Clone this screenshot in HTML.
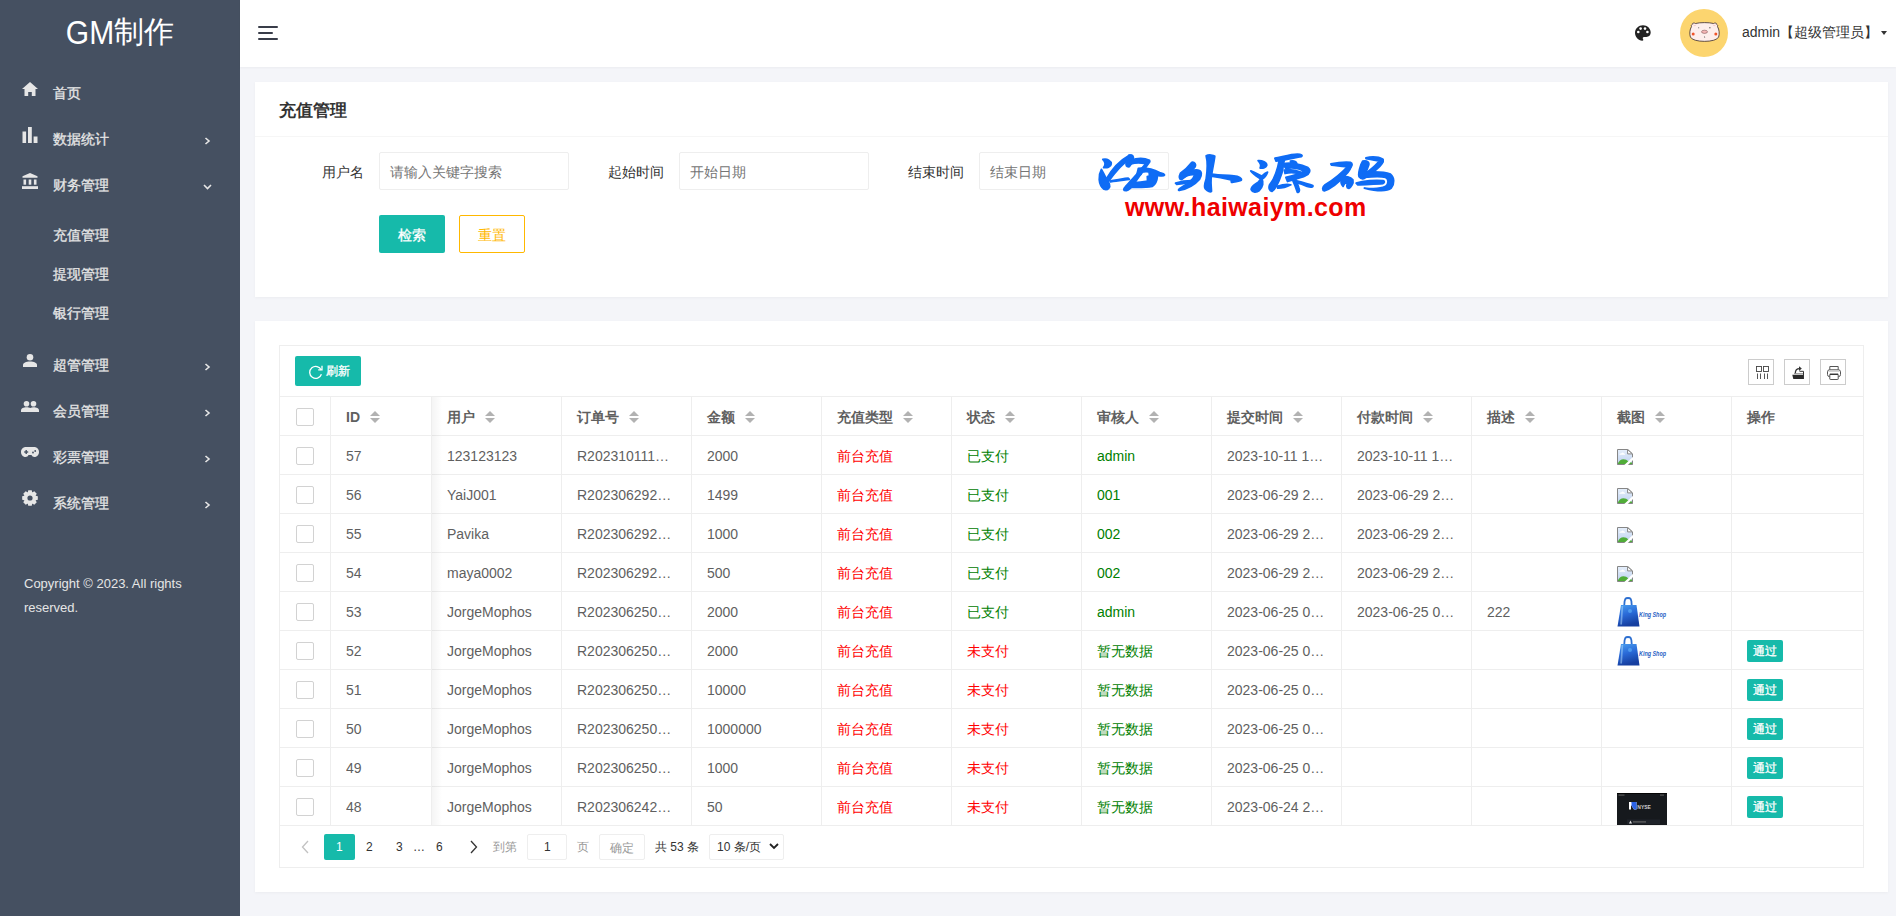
<!DOCTYPE html>
<html><head><meta charset="utf-8">
<style>
*{box-sizing:border-box;margin:0;padding:0}
html,body{width:1896px;height:916px;overflow:hidden}
body{position:relative;background:#f4f5f9;font-family:"Liberation Sans",sans-serif;font-size:14px;color:#333}
.a{position:absolute;white-space:nowrap}
.t14{font-size:14px;line-height:14px}
.t12{font-size:12px;line-height:12px}
.stk{-webkit-text-stroke:0.3px currentColor}
.card{position:absolute;background:#fff;box-shadow:0 1px 3px rgba(0,0,0,.04)}
.hl{position:absolute;height:1px;background:#eee}
.vl{position:absolute;width:1px;background:#eee}
.cb{position:absolute;width:18px;height:18px;border:1px solid #d2d2d2;border-radius:2px;background:#fff}
.th{position:absolute;font-size:14px;line-height:14px;font-weight:bold;color:#5f5f5f;white-space:nowrap}
.td{position:absolute;font-size:14px;line-height:20px;height:20px;color:#5f5f5f;white-space:nowrap;overflow:hidden;text-overflow:ellipsis;width:100px}
.sort{position:absolute;width:10px;height:12px}
.sort:before{content:"";position:absolute;left:0;top:0;border-left:5px solid transparent;border-right:5px solid transparent;border-bottom:5px solid #b2b2b2}
.sort:after{content:"";position:absolute;left:0;top:7px;border-left:5px solid transparent;border-right:5px solid transparent;border-top:5px solid #b2b2b2}
.red{color:#ff0000}
.grn{color:#008000}
.pass{-webkit-text-stroke:0.3px #fff;position:absolute;width:36px;height:22px;line-height:22px;background:#16baaa;color:#fff;font-size:12px;text-align:center;border-radius:2px}
.tool{position:absolute;top:14px;width:26px;height:26px;border:1px solid #ccc}
</style></head><body>

<div class="a" style="left:0;top:0;width:240px;height:916px;background:#455061;"></div>
<div class="a" style="left:0;top:17px;width:240px;text-align:center;font-size:30px;line-height:30px;color:#fff"><span style="display:inline-block;transform:scaleY(1.1);transform-origin:50% 4px">GM</span>制作</div>
<svg class="a" style="left:22px;top:82px" width="16" height="14" viewBox="0 0 16 14"><path d="M8 0 L16 7 L13.5 7 L13.5 14 L9.8 14 L9.8 10 L6.2 10 L6.2 14 L2.5 14 L2.5 7 L0 7 Z" fill="#e6e6e6"/></svg>
<svg class="a" style="left:22px;top:127px" width="16" height="16" viewBox="0 0 16 16"><rect x="0.5" y="4.5" width="3.6" height="11.5" fill="#e6e6e6"/><rect x="6" y="0" width="3.8" height="16" fill="#e6e6e6"/><rect x="11.6" y="9.5" width="3.9" height="6.5" fill="#e6e6e6"/></svg>
<svg class="a" style="left:22px;top:173px" width="16" height="16" viewBox="0 0 16 16"><path d="M8 0 L15.5 3.2 L15.5 4.8 L0.5 4.8 L0.5 3.2 Z" fill="#e6e6e6"/><rect x="1.5" y="6.5" width="2.6" height="5.2" fill="#e6e6e6"/><rect x="6.7" y="6.5" width="2.6" height="5.2" fill="#e6e6e6"/><rect x="11.9" y="6.5" width="2.6" height="5.2" fill="#e6e6e6"/><rect x="0" y="13.2" width="16" height="2.8" fill="#e6e6e6"/></svg>
<svg class="a" style="left:23px;top:354px" width="14" height="13" viewBox="0 0 14 13"><circle cx="7" cy="3.3" r="3.3" fill="#e6e6e6"/><path d="M0 13 L0 11 C0 8.6 3 7.4 7 7.4 C11 7.4 14 8.6 14 11 L14 13 Z" fill="#e6e6e6"/></svg>
<svg class="a" style="left:21px;top:401px" width="18" height="11" viewBox="0 0 18 11"><circle cx="5.5" cy="2.8" r="2.8" fill="#e6e6e6"/><circle cx="12.5" cy="2.8" r="2.8" fill="#e6e6e6"/><path d="M0 11 L0 9.5 C0 7.3 2.5 6.2 5.5 6.2 C8.5 6.2 11 7.3 11 9.5 L11 11 Z" fill="#e6e6e6"/><path d="M8.2 11 L8.2 9.5 C8.2 7.3 10 6.2 12.5 6.2 C15.5 6.2 18 7.3 18 9.5 L18 11 Z" fill="#e6e6e6"/></svg>
<svg class="a" style="left:21px;top:447px" width="18" height="10" viewBox="0 0 18 10"><path d="M5 0 L13 0 C16 0 18 2.2 18 5 C18 7.8 16 10 13.5 10 C12 10 11 9 10.5 8 L7.5 8 C7 9 6 10 4.5 10 C2 10 0 7.8 0 5 C0 2.2 2 0 5 0 Z" fill="#e6e6e6"/><rect x="3.2" y="4.3" width="4" height="1.4" fill="#455061"/><rect x="4.5" y="3" width="1.4" height="4" fill="#455061"/><circle cx="12" cy="5.5" r="0.9" fill="#455061"/><circle cx="14.2" cy="4" r="0.9" fill="#455061"/></svg>
<svg class="a" style="left:22px;top:490px" width="16" height="16" viewBox="0 0 16 16"><path fill="#e6e6e6" fill-rule="evenodd" d="M13.80 5.82 L15.81 6.25 L15.81 9.75 L13.80 10.18 L13.65 10.56 L14.76 12.29 L12.29 14.76 L10.56 13.65 L10.18 13.80 L9.75 15.81 L6.25 15.81 L5.82 13.80 L5.44 13.65 L3.71 14.76 L1.24 12.29 L2.35 10.56 L2.20 10.18 L0.19 9.75 L0.19 6.25 L2.20 5.82 L2.35 5.44 L1.24 3.71 L3.71 1.24 L5.44 2.35 L5.82 2.20 L6.25 0.19 L9.75 0.19 L10.18 2.20 L10.56 2.35 L12.29 1.24 L14.76 3.71 L13.65 5.44 Z M10.6 8 A2.6 2.6 0 1 0 5.4 8 A2.6 2.6 0 1 0 10.6 8 Z"/></svg>
<div class="a t14 stk" style="left:53px;top:86px;color:#e6e6e6">首页</div>
<div class="a t14 stk" style="left:53px;top:132px;color:#e6e6e6">数据统计</div>
<svg class="a" style="left:204px;top:137px" width="7" height="8" viewBox="0 0 7 8"><path d="M1.5 1 L5 4 L1.5 7" stroke="#e6e6e6" stroke-width="1.6" fill="none"/></svg>
<div class="a t14 stk" style="left:53px;top:178px;color:#e6e6e6">财务管理</div>
<svg class="a" style="left:203px;top:184px" width="9" height="6" viewBox="0 0 9 6"><path d="M1 1 L4.5 4.5 L8 1" stroke="#e6e6e6" stroke-width="1.6" fill="none"/></svg>
<div class="a t14 stk" style="left:53px;top:228px;color:#e6e6e6">充值管理</div>
<div class="a t14 stk" style="left:53px;top:267px;color:#e6e6e6">提现管理</div>
<div class="a t14 stk" style="left:53px;top:306px;color:#e6e6e6">银行管理</div>
<div class="a t14 stk" style="left:53px;top:358px;color:#e6e6e6">超管管理</div>
<svg class="a" style="left:204px;top:363px" width="7" height="8" viewBox="0 0 7 8"><path d="M1.5 1 L5 4 L1.5 7" stroke="#e6e6e6" stroke-width="1.6" fill="none"/></svg>
<div class="a t14 stk" style="left:53px;top:404px;color:#e6e6e6">会员管理</div>
<svg class="a" style="left:204px;top:409px" width="7" height="8" viewBox="0 0 7 8"><path d="M1.5 1 L5 4 L1.5 7" stroke="#e6e6e6" stroke-width="1.6" fill="none"/></svg>
<div class="a t14 stk" style="left:53px;top:450px;color:#e6e6e6">彩票管理</div>
<svg class="a" style="left:204px;top:455px" width="7" height="8" viewBox="0 0 7 8"><path d="M1.5 1 L5 4 L1.5 7" stroke="#e6e6e6" stroke-width="1.6" fill="none"/></svg>
<div class="a t14 stk" style="left:53px;top:496px;color:#e6e6e6">系统管理</div>
<svg class="a" style="left:204px;top:501px" width="7" height="8" viewBox="0 0 7 8"><path d="M1.5 1 L5 4 L1.5 7" stroke="#e6e6e6" stroke-width="1.6" fill="none"/></svg>
<div class="a" style="left:24px;top:572px;font-size:13px;line-height:24px;color:#e6e6e6;white-space:normal;width:200px">Copyright © 2023. All rights<br>reserved.</div>
<div class="a" style="left:240px;top:0;width:1656px;height:67px;background:#fff;box-shadow:0 1px 2px rgba(0,0,0,.04)"></div>
<div class="a" style="left:258px;top:26px;width:20px;height:2px;background:#393d49;border-radius:1px"></div>
<div class="a" style="left:258px;top:32px;width:15px;height:2px;background:#393d49;border-radius:1px"></div>
<div class="a" style="left:258px;top:38px;width:20px;height:2px;background:#393d49;border-radius:1px"></div>
<svg class="a" style="left:1635px;top:25px" width="16" height="16" viewBox="0 0 16 16"><path d="M8 0.3 C3.6 0.3 0 3.6 0 7.8 C0 12 3.3 15.7 7.3 15.7 C8.3 15.7 8.6 15 8 14.1 C7.4 13.2 7.8 12 9 12 L11.3 12 C14 12 15.7 10.3 15.7 7.6 C15.7 3.4 12.3 0.3 8 0.3 Z" fill="#222"/><circle cx="3.3" cy="7" r="1.3" fill="#fff"/><circle cx="5.6" cy="3.6" r="1.3" fill="#fff"/><circle cx="10" cy="3.6" r="1.3" fill="#fff"/><circle cx="12.4" cy="7" r="1.3" fill="#fff"/></svg>
<div class="a" style="left:1680px;top:9px;width:48px;height:48px;border-radius:50%;background:#fcd56f"></div>
<svg class="a" style="left:1689px;top:22px" width="31" height="21" viewBox="0 0 31 21"><path d="M3.5 2.3 C3 1.2 5 0.6 6.5 1.5 C11 0.3 20 0.3 24.5 1.5 C26 0.6 28 1.2 27.5 2.3 C28.5 2.6 29 3.5 28.5 4.6 C30.3 7.5 30.7 12 29.6 15 C27.5 20.8 3.5 20.8 1.4 15 C0.3 12 0.7 7.5 2.5 4.6 C2 3.5 2.5 2.6 3.5 2.3 Z" fill="#fdeeec" stroke="#3a2a2a" stroke-width="0.8"/><path d="M4 2.5 C5 4 6.5 4 7 2.7 M24 2.7 C24.5 4 26 4 27 2.5" stroke="#f5c6c6" stroke-width="1" fill="none"/><circle cx="4.2" cy="12" r="1.5" fill="#f0542a"/><circle cx="26.8" cy="12" r="1.5" fill="#f0542a"/><ellipse cx="15.5" cy="9.8" rx="3" ry="1.6" fill="#f5b5b5" stroke="#6a4040" stroke-width="0.5"/><rect x="9.5" y="5" width="0.6" height="1.4" fill="#555"/><rect x="20.5" y="5" width="0.8" height="1.4" fill="#333"/><path d="M15 14.5 C15.8 14.3 16 15.5 15.3 16" stroke="#555" stroke-width="0.6" fill="none"/></svg>
<div class="a t14" style="left:1742px;top:25px;color:#333">admin【超级管理员】</div>
<div class="a" style="left:1881px;top:31px;border-left:3.5px solid transparent;border-right:3.5px solid transparent;border-top:4px solid #333"></div>
<div class="card" style="left:255px;top:82px;width:1633px;height:215px"></div>
<div class="a" style="left:279px;top:102px;font-size:16.5px;line-height:16px;font-weight:bold;color:#333">充值管理</div>
<div class="hl" style="left:255px;top:136px;width:1633px;background:#f6f6f6"></div>
<div class="a t14" style="left:322px;top:165px;color:#333">用户名</div>
<div class="a" style="left:379px;top:152px;width:190px;height:38px;border:1px solid #eee;border-radius:2px;background:#fff"></div>
<div class="a t14" style="left:390px;top:165px;color:#757575">请输入关键字搜索</div>
<div class="a t14" style="left:608px;top:165px;color:#333">起始时间</div>
<div class="a" style="left:679px;top:152px;width:190px;height:38px;border:1px solid #eee;border-radius:2px;background:#fff"></div>
<div class="a t14" style="left:690px;top:165px;color:#757575">开始日期</div>
<div class="a t14" style="left:908px;top:165px;color:#333">结束时间</div>
<div class="a" style="left:979px;top:152px;width:190px;height:38px;border:1px solid #eee;border-radius:2px;background:#fff"></div>
<div class="a t14" style="left:990px;top:165px;color:#757575">结束日期</div>
<div class="a" style="left:379px;top:215px;width:66px;height:38px;background:#16baaa;border-radius:2px"></div>
<div class="a t14 stk" style="left:398px;top:228px;color:#fff">检索</div>
<div class="a" style="left:459px;top:215px;width:66px;height:38px;border:1px solid #ffb800;border-radius:2px;background:#fff"></div>
<div class="a t14" style="left:478px;top:228px;color:#ffb800">重置</div>
<svg class="a" style="left:1095px;top:148px" width="155" height="50" viewBox="0 0 1896 612"><g fill="#0f6cf5" fill-rule="evenodd" stroke="#0f6cf5" stroke-width="22" stroke-linejoin="round"><path d="M95 140 C150 125 200 160 198 195 C195 235 145 245 105 240 C135 205 125 170 95 140 Z"/><path d="M78 262 C40 330 35 450 110 505 C160 520 190 480 175 440 C160 400 135 370 120 340 C100 300 88 280 78 262 Z"/><path d="M130 390 C200 270 310 150 420 90 C450 80 470 95 450 110 C350 180 250 290 170 400 Z"/><path d="M415 88 C455 80 480 105 465 140 C455 175 445 205 420 228 C385 235 370 210 382 180 C395 150 400 115 415 88 Z"/><path d="M430 150 C500 128 600 120 665 150 C680 165 650 185 615 190 C555 180 495 178 440 195 Z"/><path d="M635 175 C560 265 455 385 370 475 C340 505 345 525 385 522 C420 515 445 485 475 440 C545 340 610 250 668 170 Z"/><path d="M530 250 C640 240 720 265 790 300 C830 310 855 318 850 332 C840 350 790 340 765 335 C760 390 745 445 700 470 C620 485 520 480 440 482 L455 428 C540 420 600 412 645 405 C665 370 672 330 660 292 C610 282 565 292 515 315 Z M525 300 C545 285 575 285 570 305 C560 330 540 340 520 335 Z M640 350 C660 340 685 345 680 370 C675 395 660 410 640 405 C645 385 640 365 640 350 Z"/><path d="M185 405 C260 390 330 375 405 368 L420 385 C340 395 270 400 190 415 Z"/><path d="M1185 175 C1220 170 1240 200 1225 230 C1180 290 1120 340 1060 385 C1030 390 1025 350 1045 310 C1100 270 1150 220 1185 175 Z"/><path d="M1050 320 C1120 290 1200 265 1260 270 C1310 280 1310 330 1280 380 C1220 450 1120 500 1030 520 C1010 515 1030 500 1060 480 C1130 440 1200 390 1220 330 C1180 320 1120 340 1070 370 Z"/><path d="M985 430 C1050 410 1120 400 1180 400 C1170 420 1100 435 1000 445 Z"/><path d="M1360 95 C1390 80 1450 85 1465 100 C1460 160 1430 280 1420 380 C1415 440 1425 500 1425 530 C1410 545 1380 530 1350 500 C1330 480 1340 440 1360 380 C1375 280 1380 170 1360 95 Z"/><path d="M1420 320 C1500 330 1620 335 1700 340 C1760 345 1800 370 1790 395 C1760 410 1700 415 1670 420 L1665 390 C1600 375 1500 355 1420 345 Z"/></g></svg>
<svg class="a" style="left:1245px;top:148px" width="155" height="50" viewBox="0 0 1896 612"><g fill="#0f6cf5" fill-rule="evenodd" stroke="#0f6cf5" stroke-width="22" stroke-linejoin="round"><path d="M160 155 C210 150 270 180 265 215 C255 245 210 250 185 245 C200 215 185 180 160 155 Z"/><path d="M70 280 C120 300 170 330 205 345 C230 320 260 300 275 295 C260 340 230 370 200 385 C150 350 100 320 70 280 Z"/><path d="M200 370 C235 420 215 480 175 520 C140 548 90 545 75 510 C70 470 120 450 165 415 Z"/><path d="M365 125 C450 110 560 75 640 75 C690 75 710 90 690 105 C600 120 500 150 380 160 Z"/><path d="M420 145 C400 250 360 380 300 450 C285 490 300 530 330 530 C380 510 420 400 450 310 C465 250 470 190 480 150 Z"/><path d="M460 195 C560 170 690 200 770 240 C810 270 790 320 740 340 C680 370 600 385 520 410 L500 360 C580 340 660 320 720 290 C700 260 600 230 500 250 Z"/><path d="M555 160 C600 150 640 170 630 200 L575 222 Z"/><path d="M480 270 C540 260 620 270 700 300 L690 322 C620 300 540 300 490 312 Z"/><path d="M575 375 C600 430 620 480 640 540 C660 552 672 520 660 490 C642 440 625 400 612 368 Z"/><path d="M620 400 C700 420 780 440 830 460 C840 482 800 482 760 470 C720 452 660 432 620 422 Z"/><path d="M395 470 C450 450 500 440 560 450 C520 472 460 492 400 492 Z"/><path d="M1050 195 C1120 180 1230 170 1290 175 C1320 185 1310 220 1290 240 C1230 220 1150 220 1060 210 Z"/><path d="M1280 200 C1200 290 1100 380 980 450 C940 480 945 520 970 525 C1050 500 1150 420 1230 330 C1270 290 1300 240 1305 200 Z"/><path d="M1180 360 C1230 340 1290 350 1320 390 C1330 430 1300 480 1270 495 C1240 490 1240 460 1260 420 C1230 420 1210 440 1200 470 C1180 450 1170 400 1180 360 Z"/><path d="M1480 120 C1560 100 1660 110 1690 140 C1700 170 1660 220 1600 270 C1560 300 1500 320 1490 300 C1530 270 1600 220 1640 160 C1600 150 1540 140 1480 130 Z"/><path d="M1440 160 C1490 150 1530 170 1510 220 C1490 270 1470 310 1480 350 C1460 390 1420 380 1395 350 C1380 320 1400 260 1420 200 Z"/><path d="M1450 300 C1560 290 1700 290 1780 320 C1830 360 1830 440 1790 490 C1740 530 1620 530 1460 490 C1540 500 1660 500 1720 470 C1760 440 1760 380 1720 360 C1650 340 1550 350 1460 360 Z"/><path d="M1360 430 C1450 400 1600 390 1690 400 C1720 410 1700 440 1660 440 C1580 440 1470 450 1380 450 Z"/></g></svg>
<div class="a" style="left:1125px;top:193px;font-size:25px;line-height:28px;color:#ee0000;font-weight:bold;letter-spacing:0.4px">www.haiwaiym.com</div>
<div class="card" style="left:255px;top:321px;width:1633px;height:571px"></div>
<div class="a" style="left:279px;top:345px;width:1585px;height:523px;border:1px solid #eee"></div>
<div class="a" style="left:295px;top:356px;width:66px;height:30px;background:#16baaa;border-radius:2px"></div>
<svg class="a" style="left:308px;top:364px" width="16" height="16" viewBox="0 0 16 16"><path d="M13.2 6 A6 6 0 1 0 13.4 10.2" stroke="#fff" stroke-width="1.3" fill="none"/><path d="M10.2 5.8 L14 5.8 L14 1.8" stroke="#fff" stroke-width="1.3" fill="none"/></svg>
<div class="a t12 stk" style="left:326px;top:365px;color:#fff">刷新</div>
<div class="a" style="left:1748px;top:359px;width:26px;height:26px;border:1px solid #ccc"></div>
<svg class="a" style="left:1756px;top:366px" width="14" height="14" viewBox="0 0 14 14"><rect x="0.5" y="0.5" width="5" height="5" fill="none" stroke="#444" stroke-width="0.9"/><rect x="7.5" y="0.5" width="5" height="5" fill="none" stroke="#444" stroke-width="0.9"/><path d="M1.5 7.5 V13 M4.5 7.5 V13 M8.5 7.5 V13 M11.5 7.5 V13" stroke="#444" stroke-width="0.9"/></svg>
<div class="a" style="left:1784px;top:359px;width:26px;height:26px;border:1px solid #ccc"></div>
<svg class="a" style="left:1792px;top:365px" width="13" height="15" viewBox="0 0 13 15"><path d="M0.3 9.8 L12 9.8 L12 14 L1.3 14 Z" fill="#2a2a2a"/><path d="M2 8.6 H12" stroke="#999" stroke-width="1"/><path d="M11.5 14 V6.3 H7.5" stroke="#333" stroke-width="1" fill="none"/><path d="M3.3 8.3 C3.3 5.3 4.8 3.6 7.6 3.6" stroke="#333" stroke-width="1.3" fill="none"/><path d="M7 1.2 L9.8 3.6 L7 6 Z" fill="#333"/></svg>
<div class="a" style="left:1820px;top:359px;width:26px;height:26px;border:1px solid #ccc"></div>
<svg class="a" style="left:1827px;top:366px" width="14" height="14" viewBox="0 0 14 14"><path d="M2.8 3.8 V0.5 H11.2 V3.8" stroke="#555" stroke-width="1" fill="none"/><rect x="0.5" y="3.8" width="13" height="6.8" rx="2" fill="none" stroke="#555" stroke-width="1"/><rect x="2.8" y="8.3" width="8.4" height="5.2" rx="0.5" fill="#fff" stroke="#555" stroke-width="1"/><path d="M2.8 8.3 H11.2" stroke="#333" stroke-width="1.3"/><path d="M1.5 5.3 H12.5" stroke="#bbb" stroke-width="0.8"/></svg>
<div class="hl" style="left:279px;top:396px;width:1585px"></div>
<div class="hl" style="left:279px;top:435px;width:1585px"></div>
<div class="hl" style="left:279px;top:474px;width:1585px"></div>
<div class="hl" style="left:279px;top:513px;width:1585px"></div>
<div class="hl" style="left:279px;top:552px;width:1585px"></div>
<div class="hl" style="left:279px;top:591px;width:1585px"></div>
<div class="hl" style="left:279px;top:630px;width:1585px"></div>
<div class="hl" style="left:279px;top:669px;width:1585px"></div>
<div class="hl" style="left:279px;top:708px;width:1585px"></div>
<div class="hl" style="left:279px;top:747px;width:1585px"></div>
<div class="hl" style="left:279px;top:786px;width:1585px"></div>
<div class="hl" style="left:279px;top:825px;width:1585px"></div>
<div class="vl" style="left:330px;top:396px;height:430px"></div>
<div class="vl" style="left:431px;top:396px;height:430px"></div>
<div class="vl" style="left:561px;top:396px;height:430px"></div>
<div class="vl" style="left:691px;top:396px;height:430px"></div>
<div class="vl" style="left:821px;top:396px;height:430px"></div>
<div class="vl" style="left:951px;top:396px;height:430px"></div>
<div class="vl" style="left:1081px;top:396px;height:430px"></div>
<div class="vl" style="left:1211px;top:396px;height:430px"></div>
<div class="vl" style="left:1341px;top:396px;height:430px"></div>
<div class="vl" style="left:1471px;top:396px;height:430px"></div>
<div class="vl" style="left:1601px;top:396px;height:430px"></div>
<div class="vl" style="left:1731px;top:396px;height:430px"></div>
<div class="a" style="left:432px;top:397px;width:10px;height:428px;background:linear-gradient(to right,rgba(0,0,0,.045),rgba(0,0,0,0))"></div>
<div class="cb" style="left:296px;top:408px"></div>
<div class="th" style="left:346px;top:410px">ID</div>
<div class="sort" style="left:370px;top:411px"></div>
<div class="th" style="left:447px;top:410px">用户</div>
<div class="sort" style="left:485px;top:411px"></div>
<div class="th" style="left:577px;top:410px">订单号</div>
<div class="sort" style="left:629px;top:411px"></div>
<div class="th" style="left:707px;top:410px">金额</div>
<div class="sort" style="left:745px;top:411px"></div>
<div class="th" style="left:837px;top:410px">充值类型</div>
<div class="sort" style="left:903px;top:411px"></div>
<div class="th" style="left:967px;top:410px">状态</div>
<div class="sort" style="left:1005px;top:411px"></div>
<div class="th" style="left:1097px;top:410px">审核人</div>
<div class="sort" style="left:1149px;top:411px"></div>
<div class="th" style="left:1227px;top:410px">提交时间</div>
<div class="sort" style="left:1293px;top:411px"></div>
<div class="th" style="left:1357px;top:410px">付款时间</div>
<div class="sort" style="left:1423px;top:411px"></div>
<div class="th" style="left:1487px;top:410px">描述</div>
<div class="sort" style="left:1525px;top:411px"></div>
<div class="th" style="left:1617px;top:410px">截图</div>
<div class="sort" style="left:1655px;top:411px"></div>
<div class="th" style="left:1747px;top:410px">操作</div>
<div class="cb" style="left:296px;top:447px"></div>
<div class="td" style="left:346px;top:446px">57</div>
<div class="td" style="left:447px;top:446px">123123123</div>
<div class="td" style="left:577px;top:446px">R202310111…</div>
<div class="td" style="left:707px;top:446px">2000</div>
<div class="td red" style="left:837px;top:446px">前台充值</div>
<div class="td grn" style="left:967px;top:446px">已支付</div>
<div class="td grn" style="left:1097px;top:446px">admin</div>
<div class="td" style="left:1227px;top:446px">2023-10-11 1…</div>
<div class="td" style="left:1357px;top:446px">2023-10-11 1…</div>
<svg class="a" style="left:1617px;top:449px" width="17" height="17" viewBox="0 0 17 17"><defs><linearGradient id="sk0" x1="0" y1="0" x2="0" y2="1"><stop offset="0" stop-color="#e6effb"/><stop offset="1" stop-color="#bdd1ef"/></linearGradient></defs><path d="M0.5 0.5 H10.8 L15.5 5 V15.5 H0.5 Z" fill="url(#sk0)"/><path d="M2.4 5.8 C2.4 4.7 3.4 4.3 4.2 4.6 C4.7 3.3 6.6 3.2 7 4.6 C7.8 4.5 8.3 5.2 8.1 5.8 Z" fill="#fff"/><path d="M0.5 15.5 C1.5 11.8 4 10.2 6.5 10.2 C8.5 10.2 10 11 11.2 12.2 C12.5 12.8 14 13.2 15.5 14 V15.5 Z" fill="#50ad38"/><path d="M0.5 0.5 H10.8 L15.5 5 V15.5 H0.5 Z" fill="none" stroke="#868686" stroke-width="1"/><path d="M10.6 0.6 V4.9 H15.4 Z" fill="#fff" stroke="#868686" stroke-width="1" stroke-linejoin="round"/><path d="M6.8 16.6 L16.6 7.3 L16.6 10.6 L10.3 16.6 Z" fill="#fff"/></svg>
<div class="cb" style="left:296px;top:486px"></div>
<div class="td" style="left:346px;top:485px">56</div>
<div class="td" style="left:447px;top:485px">YaiJ001</div>
<div class="td" style="left:577px;top:485px">R202306292…</div>
<div class="td" style="left:707px;top:485px">1499</div>
<div class="td red" style="left:837px;top:485px">前台充值</div>
<div class="td grn" style="left:967px;top:485px">已支付</div>
<div class="td grn" style="left:1097px;top:485px">001</div>
<div class="td" style="left:1227px;top:485px">2023-06-29 2…</div>
<div class="td" style="left:1357px;top:485px">2023-06-29 2…</div>
<svg class="a" style="left:1617px;top:488px" width="17" height="17" viewBox="0 0 17 17"><defs><linearGradient id="sk1" x1="0" y1="0" x2="0" y2="1"><stop offset="0" stop-color="#e6effb"/><stop offset="1" stop-color="#bdd1ef"/></linearGradient></defs><path d="M0.5 0.5 H10.8 L15.5 5 V15.5 H0.5 Z" fill="url(#sk1)"/><path d="M2.4 5.8 C2.4 4.7 3.4 4.3 4.2 4.6 C4.7 3.3 6.6 3.2 7 4.6 C7.8 4.5 8.3 5.2 8.1 5.8 Z" fill="#fff"/><path d="M0.5 15.5 C1.5 11.8 4 10.2 6.5 10.2 C8.5 10.2 10 11 11.2 12.2 C12.5 12.8 14 13.2 15.5 14 V15.5 Z" fill="#50ad38"/><path d="M0.5 0.5 H10.8 L15.5 5 V15.5 H0.5 Z" fill="none" stroke="#868686" stroke-width="1"/><path d="M10.6 0.6 V4.9 H15.4 Z" fill="#fff" stroke="#868686" stroke-width="1" stroke-linejoin="round"/><path d="M6.8 16.6 L16.6 7.3 L16.6 10.6 L10.3 16.6 Z" fill="#fff"/></svg>
<div class="cb" style="left:296px;top:525px"></div>
<div class="td" style="left:346px;top:524px">55</div>
<div class="td" style="left:447px;top:524px">Pavika</div>
<div class="td" style="left:577px;top:524px">R202306292…</div>
<div class="td" style="left:707px;top:524px">1000</div>
<div class="td red" style="left:837px;top:524px">前台充值</div>
<div class="td grn" style="left:967px;top:524px">已支付</div>
<div class="td grn" style="left:1097px;top:524px">002</div>
<div class="td" style="left:1227px;top:524px">2023-06-29 2…</div>
<div class="td" style="left:1357px;top:524px">2023-06-29 2…</div>
<svg class="a" style="left:1617px;top:527px" width="17" height="17" viewBox="0 0 17 17"><defs><linearGradient id="sk2" x1="0" y1="0" x2="0" y2="1"><stop offset="0" stop-color="#e6effb"/><stop offset="1" stop-color="#bdd1ef"/></linearGradient></defs><path d="M0.5 0.5 H10.8 L15.5 5 V15.5 H0.5 Z" fill="url(#sk2)"/><path d="M2.4 5.8 C2.4 4.7 3.4 4.3 4.2 4.6 C4.7 3.3 6.6 3.2 7 4.6 C7.8 4.5 8.3 5.2 8.1 5.8 Z" fill="#fff"/><path d="M0.5 15.5 C1.5 11.8 4 10.2 6.5 10.2 C8.5 10.2 10 11 11.2 12.2 C12.5 12.8 14 13.2 15.5 14 V15.5 Z" fill="#50ad38"/><path d="M0.5 0.5 H10.8 L15.5 5 V15.5 H0.5 Z" fill="none" stroke="#868686" stroke-width="1"/><path d="M10.6 0.6 V4.9 H15.4 Z" fill="#fff" stroke="#868686" stroke-width="1" stroke-linejoin="round"/><path d="M6.8 16.6 L16.6 7.3 L16.6 10.6 L10.3 16.6 Z" fill="#fff"/></svg>
<div class="cb" style="left:296px;top:564px"></div>
<div class="td" style="left:346px;top:563px">54</div>
<div class="td" style="left:447px;top:563px">maya0002</div>
<div class="td" style="left:577px;top:563px">R202306292…</div>
<div class="td" style="left:707px;top:563px">500</div>
<div class="td red" style="left:837px;top:563px">前台充值</div>
<div class="td grn" style="left:967px;top:563px">已支付</div>
<div class="td grn" style="left:1097px;top:563px">002</div>
<div class="td" style="left:1227px;top:563px">2023-06-29 2…</div>
<div class="td" style="left:1357px;top:563px">2023-06-29 2…</div>
<svg class="a" style="left:1617px;top:566px" width="17" height="17" viewBox="0 0 17 17"><defs><linearGradient id="sk3" x1="0" y1="0" x2="0" y2="1"><stop offset="0" stop-color="#e6effb"/><stop offset="1" stop-color="#bdd1ef"/></linearGradient></defs><path d="M0.5 0.5 H10.8 L15.5 5 V15.5 H0.5 Z" fill="url(#sk3)"/><path d="M2.4 5.8 C2.4 4.7 3.4 4.3 4.2 4.6 C4.7 3.3 6.6 3.2 7 4.6 C7.8 4.5 8.3 5.2 8.1 5.8 Z" fill="#fff"/><path d="M0.5 15.5 C1.5 11.8 4 10.2 6.5 10.2 C8.5 10.2 10 11 11.2 12.2 C12.5 12.8 14 13.2 15.5 14 V15.5 Z" fill="#50ad38"/><path d="M0.5 0.5 H10.8 L15.5 5 V15.5 H0.5 Z" fill="none" stroke="#868686" stroke-width="1"/><path d="M10.6 0.6 V4.9 H15.4 Z" fill="#fff" stroke="#868686" stroke-width="1" stroke-linejoin="round"/><path d="M6.8 16.6 L16.6 7.3 L16.6 10.6 L10.3 16.6 Z" fill="#fff"/></svg>
<div class="cb" style="left:296px;top:603px"></div>
<div class="td" style="left:346px;top:602px">53</div>
<div class="td" style="left:447px;top:602px">JorgeMophos</div>
<div class="td" style="left:577px;top:602px">R202306250…</div>
<div class="td" style="left:707px;top:602px">2000</div>
<div class="td red" style="left:837px;top:602px">前台充值</div>
<div class="td grn" style="left:967px;top:602px">已支付</div>
<div class="td grn" style="left:1097px;top:602px">admin</div>
<div class="td" style="left:1227px;top:602px">2023-06-25 0…</div>
<div class="td" style="left:1357px;top:602px">2023-06-25 0…</div>
<div class="td" style="left:1487px;top:602px">222</div>
<svg class="a" style="left:1617px;top:597px" width="50" height="30" viewBox="0 0 50 30"><defs><linearGradient id="bg4" x1="0" y1="0" x2="0.3" y2="1"><stop offset="0" stop-color="#4aa0f0"/><stop offset=".5" stop-color="#2a6ad8"/><stop offset="1" stop-color="#163fa0"/></linearGradient></defs><path d="M7.3 8 C7.5 1.5 8.5 1 11 1 C13.5 1 14.5 1.5 14.7 8" stroke="#2d6fd0" stroke-width="1.8" fill="none"/><path d="M4 8 L19.5 8 L22.5 29.5 L0.5 29.5 Z" fill="url(#bg4)"/><path d="M4.5 9 L6.2 9 L5 27.5 L3.3 27.5 Z" fill="#a8d4fa" opacity=".55"/><circle cx="13" cy="14" r="2" fill="#6cc0ff" opacity=".5"/><text x="22" y="20.3" font-size="7.6" font-weight="bold" font-style="italic" fill="#2a5fc4" font-family="Liberation Sans" textLength="27" lengthAdjust="spacingAndGlyphs">King Shop</text></svg>
<div class="cb" style="left:296px;top:642px"></div>
<div class="td" style="left:346px;top:641px">52</div>
<div class="td" style="left:447px;top:641px">JorgeMophos</div>
<div class="td" style="left:577px;top:641px">R202306250…</div>
<div class="td" style="left:707px;top:641px">2000</div>
<div class="td red" style="left:837px;top:641px">前台充值</div>
<div class="td red" style="left:967px;top:641px">未支付</div>
<div class="td grn" style="left:1097px;top:641px">暂无数据</div>
<div class="td" style="left:1227px;top:641px">2023-06-25 0…</div>
<svg class="a" style="left:1617px;top:636px" width="50" height="30" viewBox="0 0 50 30"><defs><linearGradient id="bg5" x1="0" y1="0" x2="0.3" y2="1"><stop offset="0" stop-color="#4aa0f0"/><stop offset=".5" stop-color="#2a6ad8"/><stop offset="1" stop-color="#163fa0"/></linearGradient></defs><path d="M7.3 8 C7.5 1.5 8.5 1 11 1 C13.5 1 14.5 1.5 14.7 8" stroke="#2d6fd0" stroke-width="1.8" fill="none"/><path d="M4 8 L19.5 8 L22.5 29.5 L0.5 29.5 Z" fill="url(#bg5)"/><path d="M4.5 9 L6.2 9 L5 27.5 L3.3 27.5 Z" fill="#a8d4fa" opacity=".55"/><circle cx="13" cy="14" r="2" fill="#6cc0ff" opacity=".5"/><text x="22" y="20.3" font-size="7.6" font-weight="bold" font-style="italic" fill="#2a5fc4" font-family="Liberation Sans" textLength="27" lengthAdjust="spacingAndGlyphs">King Shop</text></svg>
<div class="pass" style="left:1747px;top:640px">通过</div>
<div class="cb" style="left:296px;top:681px"></div>
<div class="td" style="left:346px;top:680px">51</div>
<div class="td" style="left:447px;top:680px">JorgeMophos</div>
<div class="td" style="left:577px;top:680px">R202306250…</div>
<div class="td" style="left:707px;top:680px">10000</div>
<div class="td red" style="left:837px;top:680px">前台充值</div>
<div class="td red" style="left:967px;top:680px">未支付</div>
<div class="td grn" style="left:1097px;top:680px">暂无数据</div>
<div class="td" style="left:1227px;top:680px">2023-06-25 0…</div>
<div class="pass" style="left:1747px;top:679px">通过</div>
<div class="cb" style="left:296px;top:720px"></div>
<div class="td" style="left:346px;top:719px">50</div>
<div class="td" style="left:447px;top:719px">JorgeMophos</div>
<div class="td" style="left:577px;top:719px">R202306250…</div>
<div class="td" style="left:707px;top:719px">1000000</div>
<div class="td red" style="left:837px;top:719px">前台充值</div>
<div class="td red" style="left:967px;top:719px">未支付</div>
<div class="td grn" style="left:1097px;top:719px">暂无数据</div>
<div class="td" style="left:1227px;top:719px">2023-06-25 0…</div>
<div class="pass" style="left:1747px;top:718px">通过</div>
<div class="cb" style="left:296px;top:759px"></div>
<div class="td" style="left:346px;top:758px">49</div>
<div class="td" style="left:447px;top:758px">JorgeMophos</div>
<div class="td" style="left:577px;top:758px">R202306250…</div>
<div class="td" style="left:707px;top:758px">1000</div>
<div class="td red" style="left:837px;top:758px">前台充值</div>
<div class="td red" style="left:967px;top:758px">未支付</div>
<div class="td grn" style="left:1097px;top:758px">暂无数据</div>
<div class="td" style="left:1227px;top:758px">2023-06-25 0…</div>
<div class="pass" style="left:1747px;top:757px">通过</div>
<div class="cb" style="left:296px;top:798px"></div>
<div class="td" style="left:346px;top:797px">48</div>
<div class="td" style="left:447px;top:797px">JorgeMophos</div>
<div class="td" style="left:577px;top:797px">R202306242…</div>
<div class="td" style="left:707px;top:797px">50</div>
<div class="td red" style="left:837px;top:797px">前台充值</div>
<div class="td red" style="left:967px;top:797px">未支付</div>
<div class="td grn" style="left:1097px;top:797px">暂无数据</div>
<div class="td" style="left:1227px;top:797px">2023-06-24 2…</div>
<svg class="a" style="left:1617px;top:793px" width="50" height="32" viewBox="0 0 50 32"><rect width="50" height="32" fill="#16191d"/><rect x="0" y="0" width="50" height="1" fill="#050505"/><rect x="1.5" y="1.5" width="6" height="1.2" fill="#555"/><rect x="43" y="1.5" width="4" height="1.2" fill="#555"/><path d="M12 9 L14.5 9 L17.5 13.5 L17.5 9 L19.5 9 L19.5 16.5 L17 16.5 L14 12 L14 16.5 L12 16.5 Z" fill="#fff"/><path d="M14.5 9 L19.5 9 L19.5 16.5 L17 16.5 L14.5 12.5 Z" fill="#2a62e8"/><text x="20.3" y="15.8" font-size="6.2" font-weight="bold" fill="#cfcfcf" font-family="Liberation Sans" textLength="13.5" lengthAdjust="spacingAndGlyphs">NYSE</text><rect x="10" y="26.5" width="33" height="4.5" fill="#1f232a"/><path d="M12 30.5 L13.5 27.5 L15 30.5 Z" fill="#ddd"/><rect x="16" y="28.3" width="13" height="1.2" fill="#666"/></svg>
<div class="pass" style="left:1747px;top:796px">通过</div>
<div class="a" style="left:324px;top:834px;width:31px;height:26px;background:#16baaa;border-radius:2px"></div>
<div class="a t12" style="left:336px;top:841px;color:#fff">1</div>
<svg class="a" style="left:300px;top:840px" width="10" height="14" viewBox="0 0 10 14"><path d="M8 1 L2.5 7 L8 13" stroke="#c2c2c2" stroke-width="1.3" fill="none"/></svg>
<div class="a t12" style="left:366px;top:841px;color:#333">2</div>
<div class="a t12" style="left:396px;top:841px;color:#333">3</div>
<div class="a t12" style="left:436px;top:841px;color:#333">6</div>
<div class="a t12" style="left:413px;top:841px;color:#333">…</div>
<svg class="a" style="left:469px;top:840px" width="10" height="14" viewBox="0 0 10 14"><path d="M2 1 L7.5 7 L2 13" stroke="#333" stroke-width="1.3" fill="none"/></svg>
<div class="a t12" style="left:493px;top:841px;color:#999">到第</div>
<div class="a" style="left:527px;top:834px;width:40px;height:26px;border:1px solid #eee;border-radius:2px"></div>
<div class="a t12" style="left:544px;top:841px;color:#333">1</div>
<div class="a t12" style="left:577px;top:841px;color:#999">页</div>
<div class="a" style="left:599px;top:834px;width:46px;height:26px;border:1px solid #eee;border-radius:2px"></div>
<div class="a t12" style="left:610px;top:842px;color:#999">确定</div>
<div class="a t12" style="left:655px;top:841px;color:#333">共 53 条</div>
<div class="a" style="left:709px;top:834px;width:75px;height:26px;border:1px solid #eee;border-radius:2px"></div>
<div class="a t12" style="left:717px;top:841px;color:#333">10 条/页</div>
<svg class="a" style="left:769px;top:843px" width="10" height="7" viewBox="0 0 10 7"><path d="M1 1 L5 5 L9 1" stroke="#222" stroke-width="1.8" fill="none"/></svg>
</body></html>
